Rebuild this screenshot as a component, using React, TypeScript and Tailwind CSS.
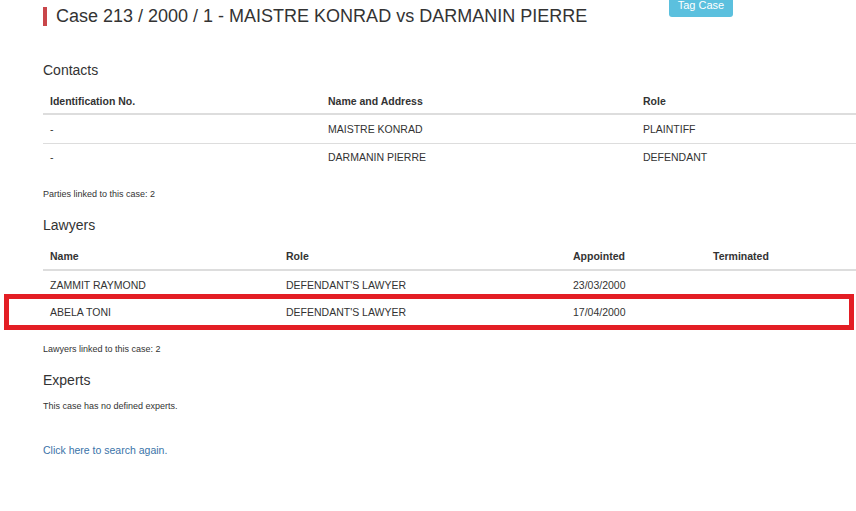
import React from 'react'

const contacts = [
    { id: '-', name: 'MAISTRE KONRAD', role: 'PLAINTIFF' },
    { id: '-', name: 'DARMANIN PIERRE', role: 'DEFENDANT' },
]

const lawyers = [
    { name: 'ZAMMIT RAYMOND', role: "DEFENDANT'S LAWYER", appointed: '23/03/2000', terminated: '' },
    { name: 'ABELA TONI', role: "DEFENDANT'S LAWYER", appointed: '17/04/2000', terminated: '' },
]

export default function App() {
    return (
        <div
            className="min-h-[511px] w-[856px] overflow-hidden bg-white text-[#333]"
            style={{ fontFamily: '"Liberation Sans", Arial, sans-serif' }}
        >
            {/* Title row */}
            <div className="flex pl-[43px]">
                <div className="flex w-[626px] items-center gap-[9px] pt-[7px]">
                    <div className="h-[19px] w-[4px] bg-[#c9464a]"></div>
                    <h1 className="text-[18px] leading-[19px] text-[#333]">
                        Case 213 / 2000 / 1 - MAISTRE KONRAD vs DARMANIN PIERRE
                    </h1>
                </div>
                <button className="-mt-[6px] h-[23px] w-[64px] rounded-[3px] bg-[#5bc0de] text-[11px] leading-[21px] text-white">
                    Tag Case
                </button>
            </div>

            <div className="pl-[43px]">
                {/* Contacts */}
                <h2 className="mt-[36px] text-[14px] leading-[16px]">Contacts</h2>
                <div className="mt-[10px] text-[10.5px]">
                    <div className="grid h-[27px] grid-cols-[278px_315px_1fr] items-center border-b-2 border-[#ddd] pt-[2px] font-bold">
                        <div className="px-[7px]">Identification No.</div>
                        <div className="px-[7px]">Name and Address</div>
                        <div className="px-[7px]">Role</div>
                    </div>
                    {contacts.map((c, i) => (
                        <div
                            key={i}
                            className={`grid h-[28px] grid-cols-[278px_315px_1fr] items-center pt-[1px] ${i > 0 ? 'border-t border-[#ddd]' : ''}`}
                        >
                            <div className="px-[7px]">{c.id}</div>
                            <div className="px-[7px]">{c.name}</div>
                            <div className="px-[7px]">{c.role}</div>
                        </div>
                    ))}
                </div>
                <p className="mt-[18px] text-[9px] leading-[10px]">Parties linked to this case: 2</p>

                {/* Lawyers */}
                <h2 className="mt-[18px] text-[14px] leading-[16px]">Lawyers</h2>
                <div className="mt-[11px] text-[10.5px]">
                    <div className="grid h-[27px] grid-cols-[236px_287px_140px_1fr] items-center border-b-2 border-[#ddd] pt-[1px] font-bold">
                        <div className="px-[7px]">Name</div>
                        <div className="px-[7px]">Role</div>
                        <div className="px-[7px]">Appointed</div>
                        <div className="px-[7px]">Terminated</div>
                    </div>
                    {lawyers.map((l, i) => (
                        <div
                            key={i}
                            className={`relative grid grid-cols-[236px_287px_140px_1fr] items-center ${i === 0 ? 'h-[28px] pt-[1px]' : 'h-[27px]'}`}
                        >
                            <div className="px-[7px]">{l.name}</div>
                            <div className="px-[7px]">{l.role}</div>
                            <div className="px-[7px]">{l.appointed}</div>
                            <div className="px-[7px]">{l.terminated}</div>
                            {/* highlighted row */}
                            {i === 1 && (
                                <div className="pointer-events-none absolute -top-[5px] -bottom-[4px] -left-[39px] right-[2px] border-[5px] border-[#e31e24]"></div>
                            )}
                        </div>
                    ))}
                </div>
                <p className="mt-[18px] text-[9px] leading-[10px]">Lawyers linked to this case: 2</p>

                {/* Experts */}
                <h2 className="mt-[18px] text-[14px] leading-[16px]">Experts</h2>
                <p className="mt-[13px] text-[9px] leading-[10px]">This case has no defined experts.</p>

                <a href="#" className="mt-[33px] block text-[10.5px] leading-[13px] text-[#3a73a8]">
                    Click here to search again.
                </a>
            </div>
        </div>
    )
}
